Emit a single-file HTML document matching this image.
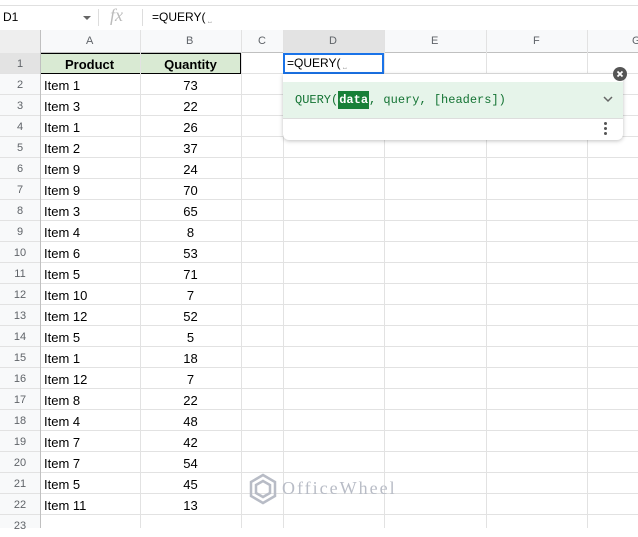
<!DOCTYPE html><html><head><style>
body{margin:0;width:638px;height:528px;overflow:hidden;background:#fff;font-family:"Liberation Sans",Arial,sans-serif;position:relative}
.a{position:absolute}
.v{position:absolute;top:30px;width:1px;height:498px;background:#e2e2e2}
.col{position:absolute;top:54px;font-size:13px;line-height:21px}
.col div{height:21px}
</style></head><body>
<div class="a" style="left:0;top:5px;width:638px;height:24px;border-top:1px solid #e0e0e0;border-bottom:1px solid #c8c8c8"></div>
<div class="a" style="left:3px;top:10px;font-size:12px">D1</div>
<div class="a" style="left:83px;top:16px;width:0;height:0;border-left:4px solid transparent;border-right:4px solid transparent;border-top:4px solid #666"></div>
<div class="a" style="left:98px;top:9px;width:1px;height:17px;background:#ddd"></div>
<div class="a" style="left:110px;top:5px;font-size:18px;font-style:italic;color:#bbb;font-family:'Liberation Serif',serif">fx</div>
<div class="a" style="left:142px;top:9px;width:1px;height:17px;background:#ddd"></div>
<div class="a" style="left:152px;top:10px;font-size:12px">=QUERY(<span style="color:#aaa;font-size:9px"> ⎵</span></div>
<div class="a" style="left:0;top:30px;width:638px;height:23px;background:#f8f9fa;border-bottom:1px solid #c0c0c0;box-sizing:border-box"></div>
<div class="a" style="left:0;top:30px;width:40px;height:23px;background:#eeeeee"></div>
<div class="a" style="left:283px;top:30px;width:101px;height:23px;background:#e3e3e3"></div>
<div class="a" style="left:0;top:53px;width:40px;height:475px;background:#f8f9fa;border-right:1px solid #c0c0c0"></div>
<div class="a" style="left:0;top:53px;width:40px;height:21px;background:#e3e3e3"></div>
<div class="a" style="left:0;top:53px;width:638px;height:475px;background:repeating-linear-gradient(to bottom,transparent 0 20px,#e2e2e2 20px 21px)"></div>
<div class="a" style="left:40px;top:53px;width:201px;height:21px;background:#d9ead3;border:1px solid #000;box-sizing:border-box"></div>
<div class="a" style="left:140px;top:53px;width:1px;height:21px;background:#000"></div>
<div class="v" style="left:40px;background:#c0c0c0"></div>
<div class="v" style="left:140px"></div><div class="v" style="left:241px"></div><div class="v" style="left:283px"></div><div class="v" style="left:384px"></div><div class="v" style="left:486px"></div><div class="v" style="left:587px"></div>
<div class="a" style="left:0;top:30px;width:638px;height:23px;font-size:11px;color:#5f6368;line-height:23px">
<span class="a" style="left:86px">A</span><span class="a" style="left:186px">B</span><span class="a" style="left:258px">C</span><span class="a" style="left:329px">D</span><span class="a" style="left:431px">E</span><span class="a" style="left:533px">F</span><span class="a" style="left:632px">G</span></div>
<div class="col" style="left:0;width:40px;text-align:center;font-size:11px;color:#5f6368"><div>1</div><div>2</div><div>3</div><div>4</div><div>5</div><div>6</div><div>7</div><div>8</div><div>9</div><div>10</div><div>11</div><div>12</div><div>13</div><div>14</div><div>15</div><div>16</div><div>17</div><div>18</div><div>19</div><div>20</div><div>21</div><div>22</div><div>23</div></div>
<div class="col" style="left:44px"><div style="font-weight:bold;padding-left:21px">Product</div><div>Item 1</div><div>Item 3</div><div>Item 1</div><div>Item 2</div><div>Item 9</div><div>Item 9</div><div>Item 3</div><div>Item 4</div><div>Item 6</div><div>Item 5</div><div>Item 10</div><div>Item 12</div><div>Item 5</div><div>Item 1</div><div>Item 12</div><div>Item 8</div><div>Item 4</div><div>Item 7</div><div>Item 7</div><div>Item 5</div><div>Item 11</div></div>
<div class="col" style="left:140px;width:101px;text-align:center"><div style="font-weight:bold">Quantity</div><div>73</div><div>22</div><div>26</div><div>37</div><div>24</div><div>70</div><div>65</div><div>8</div><div>53</div><div>71</div><div>7</div><div>52</div><div>5</div><div>18</div><div>7</div><div>22</div><div>48</div><div>42</div><div>54</div><div>45</div><div>13</div></div>
<div class="a" style="left:283px;top:53px;width:101px;height:21px;border:2px solid #1a73e8;box-sizing:border-box;background:#fff;font-size:12px;line-height:17px;padding-left:2px">=QUERY(<span style="color:#aaa;font-size:9px"> ⎵</span></div>
<div class="a" style="left:283px;top:74px;width:340px;height:66px;background:#fff;border-radius:0 0 6px 6px;box-shadow:0 1px 4px rgba(0,0,0,.25)"></div>
<div class="a" style="left:283px;top:82px;width:340px;height:36px;background:#e6f4ea;border-bottom:1px solid #ddd"></div>
<div class="a" style="left:295px;top:93px;font-family:'Liberation Mono',monospace;font-size:12px;color:#137333">QUERY(<span style="background:#188038;color:#fff;font-weight:bold;padding:2px 1px">data</span>, query, [headers])</div>
<svg class="a" style="left:602px;top:94px" width="12" height="10"><path d="M2 3l4 4 4-4" stroke="#666" stroke-width="1.5" fill="none"/></svg>
<div class="a" style="left:604px;top:122px;width:3px;height:3px;background:#555;border-radius:50%;box-shadow:0 5px 0 #555,0 10px 0 #555"></div>
<svg class="a" style="left:613px;top:67px" width="14" height="14"><circle cx="7" cy="7" r="7" fill="#555"/><path d="M4.5 4.5l5 5M9.5 4.5l-5 5" stroke="#fff" stroke-width="1.8"/></svg>
<svg class="a" style="left:248px;top:473px" width="30" height="32"><path d="M15 2l12 7v14l-12 7-12-7V9z M15 8l7 4v8l-7 4-7-4v-8z" stroke="#b8bcc6" stroke-width="2.5" fill="none"/></svg>
<div class="a" style="left:282px;top:478px;font-family:'Liberation Serif',serif;font-size:18px;letter-spacing:2px;color:#b8bcc6">OfficeWheel</div>
</body></html>
